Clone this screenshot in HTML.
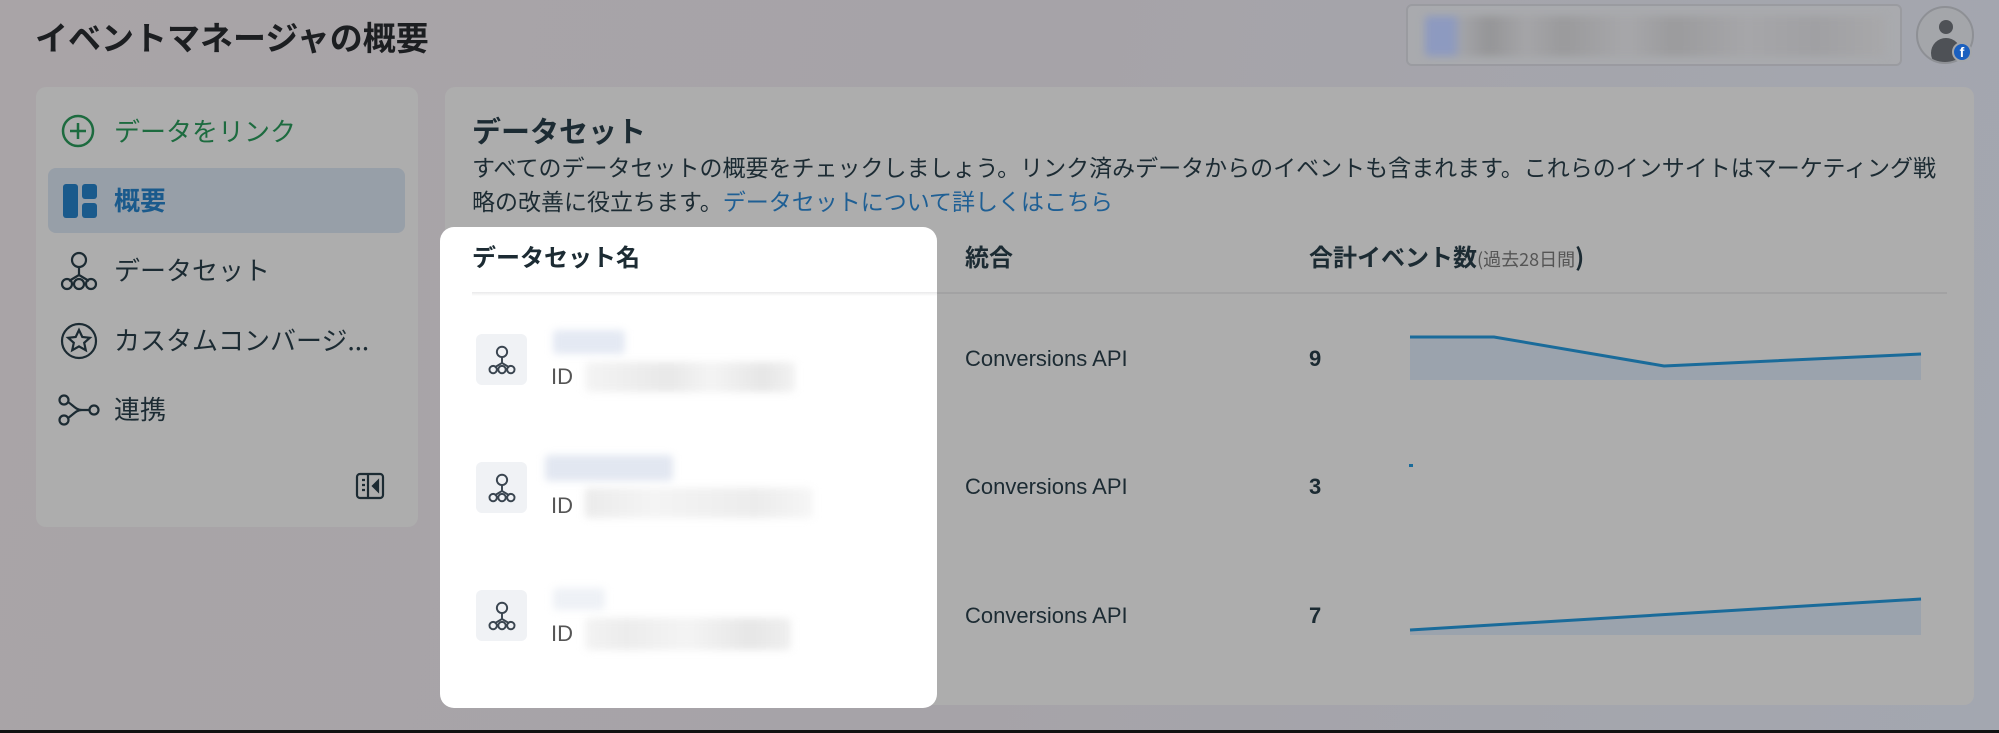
<!DOCTYPE html>
<html><head><meta charset="utf-8"><style>
*{margin:0;padding:0;box-sizing:border-box}
body{width:1999px;height:733px;overflow:hidden;position:relative;background:linear-gradient(100deg,#a9a4a7 0%,#a6a3a8 50%,#a3a7b0 100%);font-family:"Liberation Sans","Noto Sans CJK JP",sans-serif;color:#1c2b33}
.a{position:absolute;white-space:nowrap}
.jp{font-family:"Noto Sans CJK JP","Liberation Sans",sans-serif}
.card{position:absolute;background:#adadad;border-radius:10px}
.blur{position:absolute;filter:blur(4px);border-radius:4px}
</style></head><body>
<div class="a jp" style="left:35px;top:12px;font-size:33px;font-weight:700;color:#1c1e21">イベントマネージャの概要</div>
<div class="a" style="left:1406px;top:4px;width:496px;height:62px;border:2px solid #9a9ba0;border-radius:6px;background:#a9aaae"></div>
<div class="blur" style="left:1425px;top:16px;width:460px;height:40px;background:linear-gradient(90deg,#8d9ac0 0 6%,#a3a4a8 8%,#959597 14%,#a5a5a8 22%,#9a9a9c 30%,#a7a7aa 44%,#9b9b9d 54%,#a6a6a9 70%,#a0a0a3 85%,#a8a8aa)"></div>
<div class="a" style="left:1916px;top:6px;width:58px;height:58px;border-radius:50%;background:#a4a6aa;border:2px solid #8e9095;overflow:hidden">
<div style="position:absolute;left:21px;top:12px;width:14px;height:14px;border-radius:50%;background:#4e5156"></div>
<div style="position:absolute;left:13px;top:30px;width:30px;height:30px;border-radius:50%;background:#4e5156"></div></div>
<div class="a" style="left:1952px;top:42px;width:20px;height:20px;border-radius:50%;background:#1a5fbf;border:2px solid #a4a6aa;color:#fff;font-size:14px;font-weight:700;text-align:center;line-height:17px">f</div>

<div class="card" style="left:36px;top:87px;width:382px;height:440px"></div>
<svg class="a" style="left:60px;top:113px" width="36" height="36" viewBox="0 0 36 36"><circle cx="18" cy="18" r="15" fill="none" stroke="#1d6b3f" stroke-width="2.5"/><path d="M18 10v16M10 18h16" stroke="#1d6b3f" stroke-width="2.5"/></svg>
<div class="a jp" style="left:114px;top:112px;font-size:26px;color:#1d6b3f">データをリンク</div>
<div class="a" style="left:48px;top:168px;width:357px;height:65px;background:#979fa8;border-radius:8px"></div>
<svg class="a" style="left:62px;top:183px" width="36" height="36" viewBox="0 0 36 36"><rect x="1" y="1" width="15" height="34" rx="3" fill="#1a5a8c"/><rect x="20" y="1" width="15" height="15" rx="3" fill="#1a5a8c"/><rect x="20" y="20" width="15" height="15" rx="3" fill="#1a5a8c"/></svg>
<div class="a jp" style="left:114px;top:181px;font-size:26px;font-weight:700;color:#1a5a8c">概要</div>
<svg class="a" style="left:60px;top:251px" width="38" height="40" viewBox="0 0 38 40" fill="none" stroke="#1c2b33" stroke-width="2.2"><circle cx="19" cy="9" r="7"/><path d="M19 16v8M19 24l-10 6M19 24l10 6"/><circle cx="7" cy="33" r="5"/><circle cx="19" cy="33" r="5"/><circle cx="31" cy="33" r="5"/></svg>
<div class="a jp" style="left:114px;top:251px;font-size:26px">データセット</div>
<svg class="a" style="left:60px;top:322px" width="38" height="38" viewBox="0 0 38 38" fill="none" stroke="#1c2b33" stroke-width="2.2"><circle cx="19" cy="19" r="17"/><path d="M19 8l3.3 7 7.5.8-5.6 5 1.6 7.4L19 24.4l-6.8 3.8 1.6-7.4-5.6-5 7.5-.8z"/></svg>
<div class="a jp" style="left:114px;top:321px;font-size:26px">カスタムコンバージ...</div>
<svg class="a" style="left:58px;top:394px" width="42" height="32" viewBox="0 0 42 32" fill="none" stroke="#1c2b33" stroke-width="2.2"><circle cx="6" cy="6" r="4.5"/><circle cx="6" cy="26" r="4.5"/><circle cx="36" cy="16" r="4.5"/><path d="M10 8c6 4 8 8 14 8h7M10 24c6-4 8-8 14-8"/></svg>
<div class="a jp" style="left:114px;top:390px;font-size:26px">連携</div>
<svg class="a" style="left:355px;top:471px" width="30" height="30" viewBox="0 0 30 30" fill="none" stroke="#1c2b33" stroke-width="2.2"><rect x="2" y="3" width="26" height="24" rx="3"/><path d="M13 3v24M7 9h3M7 14h3M7 19h3"/><path d="M23 10l-5 5 5 5z" fill="#1c2b33"/></svg>

<div class="card" style="left:445px;top:87px;width:1529px;height:618px"></div>
<div class="a jp" style="left:472px;top:109px;font-size:29px;font-weight:700">データセット</div>
<div class="a jp" style="left:472px;top:149px;font-size:23px;line-height:34px">すべてのデータセットの概要をチェックしましょう。リンク済みデータからのイベントも含まれます。これらのインサイトはマーケティング戦<br>略の改善に役立ちます。<span style="color:#1f5f94">データセットについて詳しくはこちら</span></div>
<div class="a" style="left:472px;top:292px;width:1475px;height:2px;background:#a2a2a3"></div>

<div class="a" style="left:440px;top:227px;width:497px;height:481px;background:#fff;border-radius:14px"></div>
<div class="a" style="left:472px;top:292px;width:465px;height:4px;background:linear-gradient(#e9e9ea,#fff)"></div>
<div class="a jp" style="left:472px;top:238px;font-size:24px;font-weight:700">データセット名</div>
<div class="a jp" style="left:965px;top:238px;font-size:24px;font-weight:700">統合</div>
<div class="a jp" style="left:1309px;top:238px;font-size:24px;font-weight:700">合計イベント数<span style="font-size:18px;font-weight:400;color:#555">(過去28日間</span>)</div>

<div class="a" style="left:476px;top:334px;width:51px;height:51px;background:#f0f2f5;border-radius:6px"></div>
<div class="a" style="left:476px;top:462px;width:51px;height:51px;background:#f0f2f5;border-radius:6px"></div>
<div class="a" style="left:476px;top:590px;width:51px;height:51px;background:#f0f2f5;border-radius:6px"></div>
<svg class="a" style="left:488px;top:345px" width="28" height="30" viewBox="0 0 38 40" fill="none" stroke="#3a4550" stroke-width="2.6"><circle cx="19" cy="9" r="7"/><path d="M19 16v8M19 24l-10 6M19 24l10 6"/><circle cx="7" cy="33" r="5"/><circle cx="19" cy="33" r="5"/><circle cx="31" cy="33" r="5"/></svg>
<svg class="a" style="left:488px;top:473px" width="28" height="30" viewBox="0 0 38 40" fill="none" stroke="#3a4550" stroke-width="2.6"><circle cx="19" cy="9" r="7"/><path d="M19 16v8M19 24l-10 6M19 24l10 6"/><circle cx="7" cy="33" r="5"/><circle cx="19" cy="33" r="5"/><circle cx="31" cy="33" r="5"/></svg>
<svg class="a" style="left:488px;top:601px" width="28" height="30" viewBox="0 0 38 40" fill="none" stroke="#3a4550" stroke-width="2.6"><circle cx="19" cy="9" r="7"/><path d="M19 16v8M19 24l-10 6M19 24l10 6"/><circle cx="7" cy="33" r="5"/><circle cx="19" cy="33" r="5"/><circle cx="31" cy="33" r="5"/></svg>
<div class="blur" style="left:553px;top:330px;width:72px;height:24px;background:#e4e9f3"></div>
<div class="blur" style="left:545px;top:455px;width:128px;height:26px;background:#e2e7f1"></div>
<div class="blur" style="left:553px;top:588px;width:52px;height:22px;background:#eef1f6"></div>
<div class="a" style="left:551px;top:364px;font-size:22px;color:#555">ID</div>
<div class="a" style="left:551px;top:493px;font-size:22px;color:#555">ID</div>
<div class="a" style="left:551px;top:621px;font-size:22px;color:#555">ID</div>
<div class="blur" style="left:585px;top:362px;width:210px;height:30px;background:linear-gradient(90deg,#f4f4f4,#e8e8e8 40%,#f4f4f4 60%,#e6e6e6 85%,#f2f2f2)"></div>
<div class="blur" style="left:585px;top:488px;width:228px;height:30px;background:linear-gradient(90deg,#ebebeb,#f4f4f4 30%,#ececec 75%,#f6f6f6)"></div>
<div class="blur" style="left:585px;top:618px;width:206px;height:32px;background:linear-gradient(90deg,#f3f3f3,#ececec 20%,#f4f4f4 50%,#e6e6e6 80%,#efefef)"></div>

<div class="a" style="left:965px;top:346px;font-size:22px">Conversions API</div>
<div class="a" style="left:965px;top:474px;font-size:22px">Conversions API</div>
<div class="a" style="left:965px;top:603px;font-size:22px">Conversions API</div>
<div class="a" style="left:1309px;top:346px;font-size:22px;font-weight:700">9</div>
<div class="a" style="left:1309px;top:474px;font-size:22px;font-weight:700">3</div>
<div class="a" style="left:1309px;top:603px;font-size:22px;font-weight:700">7</div>

<svg class="a" style="left:0;top:0" width="1999" height="733">
<path d="M1410 337L1494 337L1664 366L1921 354L1921 380L1410 380Z" fill="#9ba3ad"/>
<path d="M1410 337L1494 337L1664 366L1921 354" fill="none" stroke="#1a6b9a" stroke-width="3"/>
<rect x="1409" y="464" width="4" height="3" fill="#1a6b9a"/>
<path d="M1410 630L1921 599L1921 635L1410 635Z" fill="#9ba3ad"/>
<path d="M1410 630L1921 599" fill="none" stroke="#1a6b9a" stroke-width="3"/>
</svg>
<div class="a" style="left:0;top:730px;width:1999px;height:3px;background:#111"></div>
</body></html>
